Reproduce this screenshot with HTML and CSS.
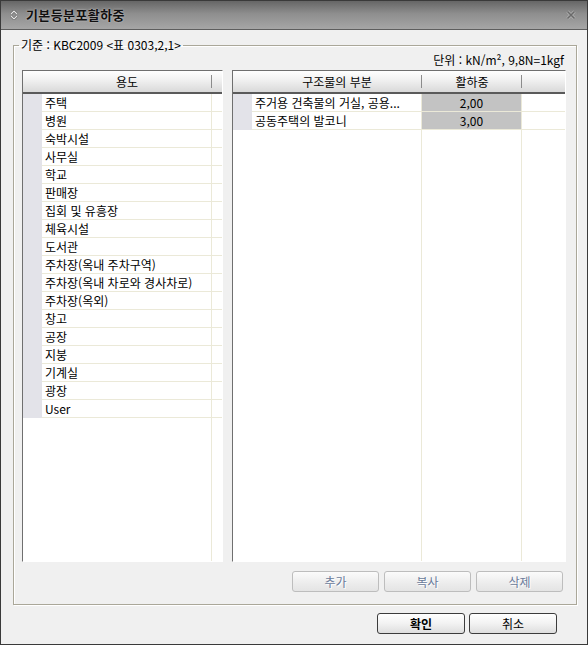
FILE: index.html
```html
<!DOCTYPE html>
<html lang="ko">
<head>
<meta charset="utf-8">
<title>기본등분포활하중</title>
<link rel="stylesheet" href="styles.css">
</head>
<body>
<div class="window">
  <div class="titlebar">
    <svg class="title-icon" viewBox="0 0 8 10" width="8" height="10"><path d="M1 4 L4 1 L7 4 M1 6 L4 9 L7 6" fill="none" stroke="#5a5a5a" stroke-width="2.4"/><path d="M1 4 L4 1 L7 4 M1 6 L4 9 L7 6" fill="none" stroke="#e6e6e6" stroke-width="1.2"/></svg>
    <span class="title">기본등분포활하중</span>
    <svg class="close" viewBox="0 0 10 10" width="10" height="10"><path d="M1.5 1.5 L8.5 8.5 M8.5 1.5 L1.5 8.5" stroke="#b4b4b4" stroke-width="3"/><path d="M1.5 1.5 L8.5 8.5 M8.5 1.5 L1.5 8.5" stroke="#6a6a6a" stroke-width="1.6"/></svg>
  </div>
  <div class="content">
    <fieldset class="group">
      <legend>기준 : KBC2009 &lt;표 0303,2,1&gt;</legend>
      <div class="unit">단위 : kN/m², 9,8N=1kgf</div>
      <div class="panels">
        <div class="grid grid-left">
          <div class="head">
            <div class="ind-h"></div>
            <div class="hc c1 sep">용도</div>
            <div class="hc cf"></div>
          </div>
          <div class="row"><div class="ind"></div><div class="c c1">주택</div><div class="c cf"></div></div>
          <div class="row"><div class="ind"></div><div class="c c1">병원</div><div class="c cf"></div></div>
          <div class="row"><div class="ind"></div><div class="c c1">숙박시설</div><div class="c cf"></div></div>
          <div class="row"><div class="ind"></div><div class="c c1">사무실</div><div class="c cf"></div></div>
          <div class="row"><div class="ind"></div><div class="c c1">학교</div><div class="c cf"></div></div>
          <div class="row"><div class="ind"></div><div class="c c1">판매장</div><div class="c cf"></div></div>
          <div class="row"><div class="ind"></div><div class="c c1">집회 및 유흥장</div><div class="c cf"></div></div>
          <div class="row"><div class="ind"></div><div class="c c1">체육시설</div><div class="c cf"></div></div>
          <div class="row"><div class="ind"></div><div class="c c1">도서관</div><div class="c cf"></div></div>
          <div class="row"><div class="ind"></div><div class="c c1">주차장(옥내 주차구역)</div><div class="c cf"></div></div>
          <div class="row"><div class="ind"></div><div class="c c1">주차장(옥내 차로와 경사차로)</div><div class="c cf"></div></div>
          <div class="row"><div class="ind"></div><div class="c c1">주차장(옥외)</div><div class="c cf"></div></div>
          <div class="row"><div class="ind"></div><div class="c c1">창고</div><div class="c cf"></div></div>
          <div class="row"><div class="ind"></div><div class="c c1">공장</div><div class="c cf"></div></div>
          <div class="row"><div class="ind"></div><div class="c c1">지붕</div><div class="c cf"></div></div>
          <div class="row"><div class="ind"></div><div class="c c1">기계실</div><div class="c cf"></div></div>
          <div class="row"><div class="ind"></div><div class="c c1">광장</div><div class="c cf"></div></div>
          <div class="row"><div class="ind"></div><div class="c c1">User</div><div class="c cf"></div></div>
          <div class="filler"><div class="ind-e"></div><div class="f c1"></div><div class="f cf"></div></div>
        </div>
        <div class="grid grid-right">
          <div class="head">
            <div class="ind-h"></div>
            <div class="hc c1 sep">구조물의 부분</div>
            <div class="hc c2 sep">활하중</div>
            <div class="hc cf"></div>
          </div>
          <div class="row"><div class="ind"></div><div class="c c1">주거용 건축물의 거실, 공용...</div><div class="c c2 val">2,00</div><div class="c cf"></div></div>
          <div class="row"><div class="ind"></div><div class="c c1">공동주택의 발코니</div><div class="c c2 val">3,00</div><div class="c cf"></div></div>
          <div class="filler"><div class="ind-e"></div><div class="f c1"></div><div class="f c2"></div><div class="f cf"></div></div>
        </div>
      </div>
      <div class="actions">
        <button class="btn btn-dis" disabled>추가</button>
        <button class="btn btn-dis" disabled>복사</button>
        <button class="btn btn-dis" disabled>삭제</button>
      </div>
    </fieldset>
    <div class="footer">
      <button class="btn btn-main btn-ok">확인</button>
      <button class="btn btn-main">취소</button>
    </div>
  </div>
</div>
</body>
</html>
```

FILE: styles.css
```css
* { box-sizing: border-box; }
html, body { margin: 0; padding: 0; }
body {
  font-family: "Noto Sans CJK KR", "Liberation Sans", sans-serif;
  font-size: 12px;
  line-height: 14px;
  color: #000;
  background: #f0f0f0;
}
.window {
  width: 588px;
  height: 645px;
  border: 1px solid #3a3a3a;
  background: #f0f0f0;
  display: flex;
  flex-direction: column;
}
.titlebar {
  height: 29px;
  flex: none;
  display: flex;
  align-items: center;
  background: linear-gradient(#666666, #8e8e8e 45%, #a6a6a6);
  border-bottom: 1px solid #5e5e5e;
  padding-left: 9px;
}
.title-icon { flex: none; margin-right: 8px; }
.title {
  flex: 1;
  font-weight: bold;
  font-size: 13px;
  color: #111;
  text-shadow: 0 0 2px #d0d0d0;
  letter-spacing: 0.4px;
}
.close { flex: none; margin-right: 11px; }
.content {
  flex: 1;
  padding: 8px 0 0 12px;
  display: flex;
  flex-direction: column;
}
.group {
  margin: 0;
  width: 564px;
  min-width: 0;
  padding: 1px 10px 12px 8px;
  border: 1px solid #aaa799;
  box-shadow: inset 1px 1px 0 #fff, 1px 1px 0 #fff;
}
.group legend {
  padding: 0 2px;
  margin-left: -3px;
  line-height: 14px;
}
.unit {
  text-align: right;
  padding-right: 2px;
  margin-bottom: 3px;
  line-height: 14px;
}
.panels {
  display: flex;
  gap: 9px;
  height: 492px;
}
.grid {
  background: #fff;
  border: 1px solid;
  border-color: #6f6f6f #fff #fff #6f6f6f;
  display: flex;
  flex-direction: column;
}
.grid-left { width: 201px; }
.grid-right { width: 334px; }
.head {
  height: 23px;
  flex: none;
  display: flex;
  background: linear-gradient(#ffffff, #f4f4f4 35%, #d9d9d9);
  border-bottom: 2px solid #5a5a5a;
}
.ind-h { width: 19px; flex: none; }
.hc {
  position: relative;
  text-align: center;
  line-height: 21px;
}
.hc.sep::after {
  content: "";
  position: absolute;
  right: 0;
  top: 4px;
  height: 13px;
  border-right: 1px solid #8c8c8c;
}
.c1 { width: 170px; flex: none; }
.c2 { width: 100px; flex: none; }
.cf { flex: 1; }
.row {
  display: flex;
  height: 18px;
  flex: none;
}
.ind { width: 19px; flex: none; background: #e3e3e9; }
.c {
  border-bottom: 1px solid #ebe9d8;
  line-height: 17px;
  padding-left: 3px;
  white-space: nowrap;
  overflow: hidden;
}
.c.c1, .c.c2 { border-right: 1px solid #ebe9d8; }
.c.val {
  background: #c3c3c3;
  text-align: center;
  padding-left: 0;
}
.filler { flex: 1; display: flex; }
.ind-e { width: 19px; flex: none; }
.f.c1, .f.c2 { border-right: 1px solid #ebe9d8; }
.actions {
  display: flex;
  justify-content: flex-end;
  gap: 5px;
  margin-top: 9px;
  padding-right: 3px;
}
.btn {
  width: 87px;
  height: 21px;
  border-radius: 3px;
  font-family: inherit;
  font-size: 12px;
  line-height: 14px;
  padding: 0;
  margin: 0;
}
.btn-dis {
  border: 1px solid #bdbdbd;
  background: linear-gradient(#fbfbfb, #ececec 60%, #e4e4e4);
  color: #6b7b9a;
  text-shadow: 1px 1px 0 #fff;
}
.btn-main {
  width: 88px;
  border: 1px solid #3c3c3c;
  background: linear-gradient(#ffffff, #f2f2f2 50%, #dedede);
  color: #000;
}
.btn-ok { font-weight: bold; }
.footer {
  display: flex;
  justify-content: flex-end;
  gap: 4px;
  margin-top: 8px;
  padding-right: 30px;
}
```
